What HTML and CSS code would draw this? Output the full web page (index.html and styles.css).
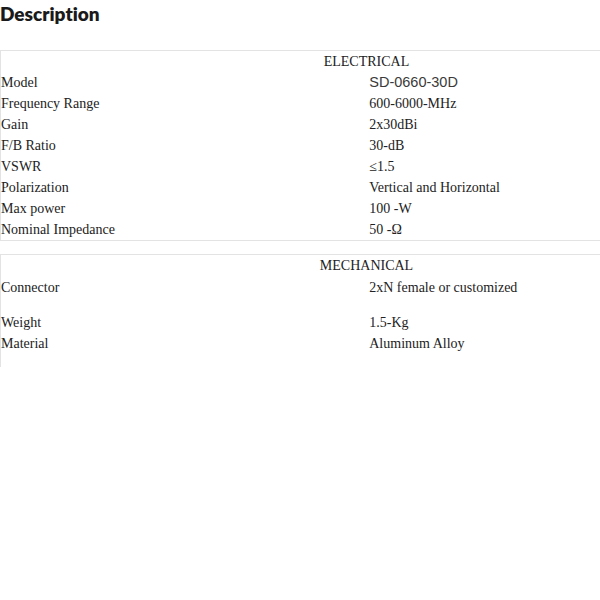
FILE: index.html
```html
<!DOCTYPE html>
<html>
<head>
<meta charset="utf-8">
<link rel="stylesheet" href="styles.css">
</head>
<body>
<h2 class="title">Description</h2>
<div class="specs">
  <table class="spec">
    <tr><td class="head" colspan="2">ELECTRICAL</td></tr>
    <tr><td>Model</td><td><span class="sans">SD-0660-30D</span></td></tr>
    <tr><td>Frequency Range</td><td>600-6000-MHz</td></tr>
    <tr><td>Gain</td><td>2x30dBi</td></tr>
    <tr><td>F/B Ratio</td><td>30-dB</td></tr>
    <tr><td>VSWR</td><td>≤1.5</td></tr>
    <tr><td>Polarization</td><td>Vertical and Horizontal</td></tr>
    <tr><td>Max power</td><td>100 -W</td></tr>
    <tr><td>Nominal Impedance</td><td>50 -Ω</td></tr>
  </table>
  <table class="spec spec-open">
    <tr><td class="head" colspan="2">MECHANICAL</td></tr>
    <tr class="tall"><td>Connector</td><td>2xN female or customized</td></tr>
    <tr><td>Weight</td><td>1.5-Kg</td></tr>
    <tr><td>Material</td><td>Aluminum Alloy</td></tr>
    <tr class="pad"><td colspan="2"></td></tr>
  </table>
</div>
</body>
</html>
```
FILE: styles.css
```css
html, body {
  margin: 0;
  padding: 0;
  background: #fff;
  overflow: hidden;
}
.title {
  margin: 0;
  padding-top: 3px;
  height: 50px;
  box-sizing: border-box;
  font-family: "Lato", "Open Sans", sans-serif;
  font-weight: 800;
  font-size: 19px;
  line-height: 22px;
  color: #1a1a1a;
  font-variant-ligatures: none;
}
.specs {
  width: 732px;
}
.spec {
  width: 100%;
  border-collapse: collapse;
  border-top: 1px solid #e3e3e3;
  border-left: 1px solid #e3e3e3;
  border-bottom: 1px solid #e3e3e3;
  font-family: "Liberation Serif", "Times New Roman", serif;
  font-size: 14px;
  color: #222;
  table-layout: fixed;
}
.spec + .spec {
  margin-top: 13px;
}
.spec-open {
  border-bottom: none;
}
.spec td {
  height: 21px;
  padding: 0;
  vertical-align: middle;
  white-space: nowrap;
}
.spec td + td {
  padding-left: 3px;
}
.spec .head {
  text-align: center;
}
.tall td {
  height: 32px;
  vertical-align: top;
  padding-top: 4px;
}
.tall td + td {
  padding-left: 3px;
}
.pad td {
  height: 13px;
}
.sans {
  font-family: "Liberation Sans", Arial, sans-serif;
  font-size: 14.5px;
  line-height: 17px;
  color: #3a3a3a;
}
```
